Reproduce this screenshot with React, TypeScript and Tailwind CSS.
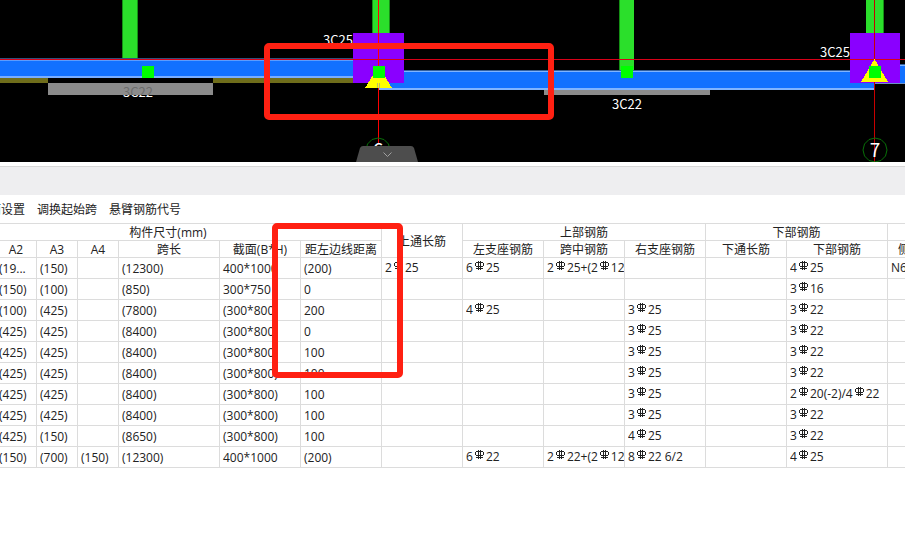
import { Fragment } from "react";

type SpanRow = {
  a2: string;
  a3: string;
  a4?: string;
  span: string;
  section: string;
  distance: string;
  topThrough?: string;
  left?: string;
  middle?: string;
  right?: string;
  bottomThrough?: string;
  bottom: string;
  side?: string;
};

// "C" marks the rebar grade symbol
const rows: SpanRow[] = [
  { a2: "(19...", a3: "(150)", span: "(12300)", section: "400*1000", distance: "(200)", topThrough: "2C25", left: "6C25", middle: "2C25+(2C12)", bottom: "4C25", side: "N6C12" },
  { a2: "(150)", a3: "(100)", span: "(850)", section: "300*750", distance: "0", bottom: "3C16" },
  { a2: "(100)", a3: "(425)", span: "(7800)", section: "(300*800)", distance: "200", left: "4C25", right: "3C25", bottom: "3C22" },
  { a2: "(425)", a3: "(425)", span: "(8400)", section: "(300*800)", distance: "0", right: "3C25", bottom: "3C22" },
  { a2: "(425)", a3: "(425)", span: "(8400)", section: "(300*800)", distance: "100", right: "3C25", bottom: "3C22" },
  { a2: "(425)", a3: "(425)", span: "(8400)", section: "(300*800)", distance: "100", right: "3C25", bottom: "3C22" },
  { a2: "(425)", a3: "(425)", span: "(8400)", section: "(300*800)", distance: "100", right: "3C25", bottom: "2C20(-2)/4C22" },
  { a2: "(425)", a3: "(425)", span: "(8400)", section: "(300*800)", distance: "100", right: "3C25", bottom: "3C22" },
  { a2: "(425)", a3: "(150)", span: "(8650)", section: "(300*800)", distance: "100", right: "4C25", bottom: "3C22" },
  { a2: "(150)", a3: "(700)", a4: "(150)", span: "(12300)", section: "400*1000", distance: "(200)", left: "6C22", middle: "2C22+(2C12)", right: "8C22 6/2", bottom: "4C25" },
];

function RebarMark() {
  return (
    <svg className="ml-[2px] mr-[2px] inline-block h-[9px] w-[9px] align-[2px]" viewBox="0 0 9 9" fill="none" stroke="#222" shapeRendering="crispEdges">
      <path d="M3.500 0V9M5.500 0V9M1 1.500H8M1 5.500H8M1 7.500H8M0.500 2V5M8.500 2V5" />
    </svg>
  );
}

function Rebar({ value }: { value?: string }) {
  if (!value) return null;
  return (
    <div className="overflow-hidden pb-[2px] whitespace-nowrap">
      {value.split("C").map((part, i) => (
        <Fragment key={i}>
          {i > 0 && <RebarMark />}
          {part}
        </Fragment>
      ))}
    </div>
  );
}

function Th({ children, colSpan, rowSpan }: { children?: React.ReactNode; colSpan?: number; rowSpan?: number }) {
  return (
    <th
      colSpan={colSpan}
      rowSpan={rowSpan}
      className="h-[17px] border-r border-b border-[#dcdcdc] px-0 pt-[2px] pb-0 text-center leading-[14px] font-normal whitespace-nowrap"
    >
      {children}
    </th>
  );
}

function Td({ children }: { children?: React.ReactNode }) {
  return (
    <td className="h-[21px] overflow-hidden border-r border-b border-[#dcdcdc] pt-[2px] pr-0 pb-0 pl-[3px] leading-4 whitespace-nowrap">
      {children}
    </td>
  );
}

function AxisBubble({ x, label }: { x: number; label: string }) {
  return (
    <g>
      <polygon
        points="0,-12 6,-10.5 10.5,-6 12,0 10.5,6 6,10.5 0,12 -6,10.5 -10.5,6 -12,0 -10.5,-6 -6,-10.5"
        transform={`translate(${x} 150)`}
        fill="none"
        stroke="#087008"
      />
      <text x={x} y="157" textAnchor="middle" fontSize="19" fill="#fff">
        {label}
      </text>
    </g>
  );
}

function BeamDrawing() {
  return (
    <svg className="block h-[162px] w-full font-['Noto_Sans_CJK_SC',sans-serif]" fontSize="13" aria-label="梁平面图">
      <defs>
        <linearGradient id="label" gradientUnits="userSpaceOnUse" x1="0" y1="84" x2="0" y2="106">
          <stop offset="0.5" stopColor="#6c6c6c" />
          <stop offset="0.5" stopColor="#fff" />
        </linearGradient>
      </defs>
      <g shapeRendering="crispEdges">
        {/* secondary beams */}
        <g fill="#2bdf2b">
          <rect x="123" width="15" height="59" />
          <rect x="619" width="15" height="71" />
          <rect x="372" width="18" height="33" />
          <rect x="866" width="18" height="33" />
        </g>
        <g fill="#159015">
          <rect x="122" width="1" height="59" />
          <rect x="137" width="1" height="59" />
          <rect x="619" width="1" height="71" />
          <rect x="372" width="1" height="33" />
          <rect x="389" width="1" height="33" />
          <rect x="883" width="1" height="33" />
        </g>

        {/* left span */}
        <rect y="58" width="353" height="20" fill="#1271ff" />
        <rect y="58" width="353" height="1" fill="#34507c" />
        <rect y="60" width="353" height="1" fill="#5c9cff" />
        <rect y="76" width="353" height="2" fill="#78adff" />
        <rect y="78" width="48" height="5" fill="#6f6d1b" />
        <rect x="213" y="78" width="140" height="5" fill="#6f6d1b" />
        <rect x="48" y="83" width="165" height="12" fill="#8b8b8b" />

        {/* right span */}
        <rect x="378" y="70" width="497" height="20" fill="#1271ff" />
        <rect x="378" y="70" width="497" height="1" fill="#34609c" />
        <rect x="378" y="71" width="497" height="1" fill="#80b4ff" />
        <rect x="378" y="88" width="497" height="2" fill="#80b4ff" />
        <rect x="544" y="90" width="166" height="5" fill="#8b8b8b" />
        <rect x="875" y="64" width="100%" height="20" fill="#1271ff" />
        <rect x="875" y="64" width="100%" height="1" fill="#34609c" />
        <rect x="875" y="65" width="100%" height="1" fill="#80b4ff" />
        <rect x="875" y="83" width="100%" height="1" fill="#6d93c8" />

        {/* columns */}
        <rect x="353" y="33" width="51" height="50" fill="#8a00ff" />
        <rect x="850" y="33" width="50" height="50" fill="#8a00ff" />
      </g>

      <text x="123" y="97" fill="url(#label)">3C22</text>
      <text x="323" y="45" fill="#fff">3C25</text>
      <text x="612" y="109" fill="#fff">3C22</text>
      <text x="820" y="57" fill="#fff">3C25</text>

      {/* axes and supports */}
      <g shapeRendering="crispEdges">
        <rect y="59" width="100%" height="1" fill="#d80018" />
        <rect x="378" width="1" height="144" fill="#f00" />
        <rect x="874" width="1" height="162" fill="#c80000" />
        <polygon points="378.5,66 392,88 365,88" fill="#ff0" />
        <polygon points="874.5,59 888,82 861,82" fill="#ff0" />
        <rect x="377" y="83" width="1" height="5" fill="#b8b870" />
        <rect x="379" y="83" width="1" height="5" fill="#b8b870" />
        <g fill="#0f0">
          <rect x="142" y="66" width="12" height="12" />
          <rect x="373" y="66" width="12" height="12" />
          <rect x="621" y="66" width="12" height="12" />
          <rect x="869" y="66" width="12" height="12" />
        </g>
      </g>

      <AxisBubble x={378} label="6" />
      <AxisBubble x={875} label="7" />
    </svg>
  );
}

export default function App() {
  return (
    <main className="relative min-h-screen overflow-hidden bg-white font-['Open_Sans','Noto_Sans_CJK_SC',sans-serif] text-xs text-[#222]">
      <section className="relative bg-black">
        <BeamDrawing />
        <button type="button" aria-label="收起" className="absolute bottom-0 left-[356px] h-4 w-[62px]">
          <svg className="block" width="62" height="16" fill="none">
            <path d="M0 16L4 2Q5 0 7 0H55Q57 0 58 2L62 16Z" fill="#4d4d4d" />
            <path d="M27.500 6.500L31.500 10.500L35.500 6.500" stroke="#a0a0a0" />
          </svg>
        </button>
      </section>

      <div className="mt-1 h-[29px] border-t border-[#d8d8d8] bg-[#eeeef0]" />

      <nav className="-ml-[23px] flex h-[29px] items-center gap-3 border-b border-[#dcdcdc] pt-[2px] whitespace-nowrap">
        <button type="button">截面设置</button>
        <button type="button">调换起始跨</button>
        <button type="button">悬臂钢筋代号</button>
      </nav>

      <div className="overflow-hidden">
        <table className="-ml-[45px] w-[1090px] table-fixed border-separate border-spacing-0">
          <colgroup>
            <col span={4} className="w-[41px]" />
            <col className="w-[101px]" />
            <col span={7} className="w-[81px]" />
            <col className="w-[101px]" />
            <col className="w-[81px]" />
            <col />
          </colgroup>
          <thead>
            <tr>
              <Th colSpan={7}>构件尺寸(mm)</Th>
              <Th rowSpan={2}>上通长筋</Th>
              <Th colSpan={3}>上部钢筋</Th>
              <Th colSpan={2}>下部钢筋</Th>
              <Th colSpan={2} />
            </tr>
            <tr>
              <Th />
              <Th>A2</Th>
              <Th>A3</Th>
              <Th>A4</Th>
              <Th>跨长</Th>
              <Th>截面(B*H)</Th>
              <Th>距左边线距离</Th>
              <Th>左支座钢筋</Th>
              <Th>跨中钢筋</Th>
              <Th>右支座钢筋</Th>
              <Th>下通长筋</Th>
              <Th>下部钢筋</Th>
              <Th>侧面通长筋</Th>
              <Th />
            </tr>
          </thead>
          <tbody>
            {rows.map((row, i) => (
              <tr key={i}>
                <Td />
                <Td>{row.a2}</Td>
                <Td>{row.a3}</Td>
                <Td>{row.a4}</Td>
                <Td>{row.span}</Td>
                <Td>{row.section}</Td>
                <Td>{row.distance}</Td>
                <Td><Rebar value={row.topThrough} /></Td>
                <Td><Rebar value={row.left} /></Td>
                <Td><Rebar value={row.middle} /></Td>
                <Td><Rebar value={row.right} /></Td>
                <Td><Rebar value={row.bottomThrough} /></Td>
                <Td><Rebar value={row.bottom} /></Td>
                <Td><Rebar value={row.side} /></Td>
                <Td />
              </tr>
            ))}
          </tbody>
        </table>
      </div>

      {/* markup boxes */}
      <div className="pointer-events-none absolute top-[43px] left-[264px] h-[77px] w-[290px] rounded-[5px] border-6 border-[#ff2012]" />
      <div className="pointer-events-none absolute top-[223px] left-[272px] h-[155px] w-[131px] rounded-[5px] border-6 border-[#ff2012]" />
    </main>
  );
}
